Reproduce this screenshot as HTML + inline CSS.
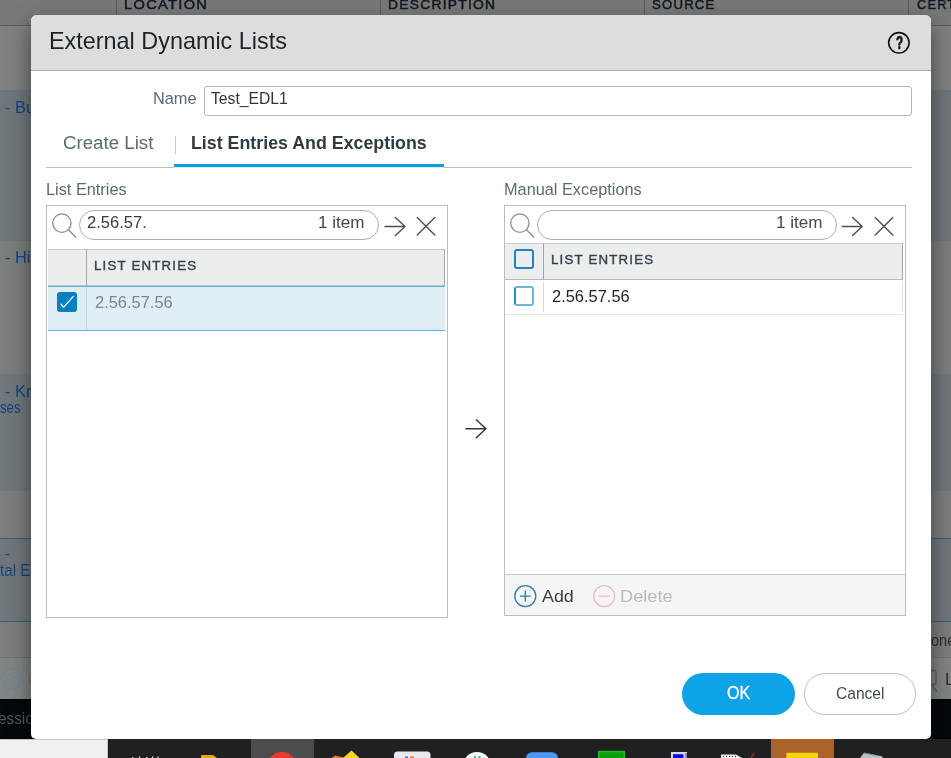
<!DOCTYPE html>
<html lang="en">
<head>
<meta charset="utf-8">
<title>External Dynamic Lists</title>
<style>
html,body{margin:0;padding:0;}
body{width:951px;height:758px;overflow:hidden;position:relative;background:#7f8080;font-family:"Liberation Sans",sans-serif;}
.abs,.t,div,span,svg,button,input,label,h1,ul,li,table{box-sizing:border-box;}
.t{position:absolute;line-height:1;white-space:nowrap;transform-origin:0 0;display:block;}
.bg div,.bg span,.bg svg{position:absolute;}
.dlg{position:absolute;left:31px;top:15px;width:900px;height:724px;background:#fff;border-radius:6px 6px 5px 5px;box-shadow:0 10px 22px rgba(0,0,0,.5);}
.dlg>*{position:absolute;}
.page *{position:absolute;}
</style>
</head>
<body>
<!-- ============ dimmed background page ============ -->
<div class="bg" style="position:absolute;left:0;top:0;width:951px;height:758px;will-change:transform;">
  <!-- grid header -->
  <div style="left:0;top:0;width:951px;height:26px;background:#767978;border-bottom:1px solid #5b5e5e;"></div>
  <div style="left:116px;top:0;width:1px;height:25px;background:#565959;"></div>
  <div style="left:380px;top:0;width:1px;height:25px;background:#565959;"></div>
  <div style="left:644px;top:0;width:1px;height:25px;background:#565959;"></div>
  <div style="left:908px;top:0;width:1px;height:25px;background:#565959;"></div>
  <span class="t" style="left:123.82px;top:-1.83px;font-size:13.5px;font-weight:400;color:#141822;letter-spacing:1.2px;transform:scaleX(1.0850);-webkit-text-stroke:0.5px #141822;">LOCATION</span><span class="t" style="left:387.97px;top:-1.83px;font-size:13.5px;font-weight:400;color:#141822;letter-spacing:1.2px;transform:scaleX(1.0266);-webkit-text-stroke:0.5px #141822;">DESCRIPTION</span><span class="t" style="left:652.40px;top:-1.83px;font-size:13.5px;font-weight:400;color:#141822;letter-spacing:1.2px;transform:scaleX(0.9784);-webkit-text-stroke:0.5px #141822;">SOURCE</span><span class="t" style="left:916.50px;top:-1.83px;font-size:13.5px;font-weight:400;color:#141822;letter-spacing:1.2px;transform:scaleX(0.9500);-webkit-text-stroke:0.5px #141822;">CERTIFICATE PROFILE</span>
  <!-- rows -->
  <div style="left:0;top:26px;width:951px;height:64px;background:#7f8080;"></div>
  <div style="left:0;top:90px;width:951px;height:151px;background:#70777b;"></div>
  <div style="left:0;top:241px;width:951px;height:133px;background:#7c7d7d;"></div>
  <div style="left:0;top:374px;width:951px;height:117px;background:#70777b;"></div>
  <div style="left:0;top:491px;width:951px;height:47px;background:#7c7d7d;"></div>
  <div style="left:0;top:538px;width:951px;height:84px;background:#70777b;border-top:1px solid #35607f;border-bottom:1px solid #35607f;"></div>
  <div style="left:0;top:622px;width:951px;height:36px;background:#7c7d7d;"></div>
  <!-- bottom toolbar -->
  <div style="left:0;top:657px;width:951px;height:42px;background:#838484;border-top:1px solid #707272;"></div>
  <!-- status bar -->
  <div style="left:0;top:699px;width:951px;height:40px;background:#03080b;"></div>

  <span class="t" style="left:5.20px;top:100.36px;font-size:16.7px;font-weight:400;color:#14457e;transform:scaleX(0.9800);">- Bulletproof IP addresses</span><span class="t" style="left:5.20px;top:250.36px;font-size:16.7px;font-weight:400;color:#14457e;transform:scaleX(0.9800);">- High risk IP addresses</span><span class="t" style="left:5.20px;top:383.66px;font-size:16.7px;font-weight:400;color:#14457e;transform:scaleX(0.9800);">- Known malicious IP addres</span><span class="t" style="left:0.20px;top:400.06px;font-size:16.7px;font-weight:400;color:#14457e;transform:scaleX(0.7883);">ses</span><span class="t" style="left:5.20px;top:546.26px;font-size:16.7px;font-weight:400;color:#14457e;transform:scaleX(0.9800);">-</span><span class="t" style="left:0.00px;top:563.36px;font-size:16.7px;font-weight:400;color:#14457e;transform:scaleX(0.9100);">tal Exclude List</span><span class="t" style="left:930.60px;top:631.69px;font-size:16.2px;font-weight:400;color:#2a2e31;transform:scaleX(0.9000);">one</span><span class="t" style="left:944.92px;top:671.14px;font-size:17.2px;font-weight:400;color:#2a2e31;transform:scaleX(0.9800);">Log Viewer</span><span class="t" style="left:-2.50px;top:710.99px;font-size:15.6px;font-weight:400;color:#50575c;transform:scaleX(0.9800);">ession Expire Time</span>
  <!-- toolbar icons -->
  <svg style="left:0;top:666px;" width="40" height="28" viewBox="0 666 40 28">
    <circle cx="11.9" cy="679.1" r="10.3" fill="none" stroke="#6c8797" stroke-width="1.1"/>
    <rect x="6.6" y="674.7" width="5.6" height="5.6" rx="1.4" fill="none" stroke="#6c8797" stroke-width="1.1"/>
    <rect x="10.8" y="677.8" width="7.8" height="6.2" rx="1.4" fill="#838585" stroke="#6c8797" stroke-width="1.1"/>
    <circle cx="39.2" cy="679.1" r="10.3" fill="none" stroke="#6c7478" stroke-width="1.1"/>
  </svg>
  <svg style="left:925px;top:666px;" width="26" height="30" viewBox="925 666 26 30">
    <rect x="926" y="670.5" width="10" height="14" rx="2" fill="none" stroke="#5b6063" stroke-width="1.3"/>
    <path d="M932 686 L937 691.5" stroke="#5b6063" stroke-width="1.3" fill="none"/>
  </svg>
  <!-- os bits -->
  <div style="left:0;top:739px;width:108px;height:19px;background:#f0f0f0;border-top:1px solid #c4c4c4;border-right:1px solid #c9c9c9;"></div>
  <div style="left:108px;top:739px;width:843px;height:19px;background:#202020;"></div>

  <!-- taskbar icons -->
  <div style="left:251px;top:739px;width:63px;height:19px;background:#4c4c4c;"></div>
  <div style="left:771px;top:739px;width:63px;height:19px;background:#ad6228;"></div>
  <svg style="left:109px;top:739px;" width="842" height="19" viewBox="109 739 842 19">
    <g fill="#d8d8d8"><rect x="132" y="757" width="1.5" height="1"/><rect x="139" y="756.4" width="1.2" height="1.6"/><rect x="146" y="757" width="1.5" height="1"/><rect x="152" y="756.4" width="1.2" height="1.6"/><rect x="157.5" y="756.4" width="1.2" height="1.6"/></g>
    <path d="M201 758 V756 Q201 755 202 755 H213 L217 758 Z" fill="#e7a619"/>
    <circle cx="282" cy="766" r="14.2" fill="#e8392c"/>
    <path d="M331 758 L335.5 755.6 L345 758 Z" fill="#d8801f"/>
    <path d="M343 758 L351.5 750.6 L359.5 758 Z" fill="#f6d818"/>
    <rect x="394" y="751.5" width="36.5" height="12" rx="3.5" fill="#e9e9ef"/>
    <rect x="405" y="756.5" width="3" height="2" fill="#3d6fe0"/><rect x="410" y="756.5" width="4" height="2" fill="#e8702a"/>
    <circle cx="477" cy="766" r="14" fill="#fafafa"/>
    <rect x="474" y="756.2" width="2" height="2" fill="#2bb673"/><rect x="478.5" y="756.2" width="2" height="2" fill="#2bb673"/>
    <rect x="526" y="752.2" width="32" height="14" rx="6" fill="#4a99f4"/>
    <rect x="598" y="750.8" width="27" height="10" fill="#22bd22"/><rect x="599.5" y="752.3" width="24" height="8" fill="#09a009"/>
    <rect x="671" y="752" width="16" height="8" fill="#d9d9e6"/><rect x="673" y="754.2" width="10.5" height="5" fill="#0a0ae0"/><rect x="685" y="753" width="2" height="6" fill="#8e8e9a"/>
    <path d="M721 754.5 H736 L742 758 H721 Z" fill="#f2f2f2"/>
    <g fill="#222"><rect x="723" y="755.8" width="1" height="1.2"/><rect x="726" y="755.8" width="1" height="1.2"/><rect x="729" y="755.8" width="1" height="1.2"/><rect x="732" y="755.8" width="1" height="1.2"/><rect x="735" y="755.8" width="1" height="1.2"/></g>
    <path d="M750.6 758 L753.4 752.5 L754.4 753.1 L752 758 Z" fill="#9a3a2e"/>
    <rect x="786.3" y="752.7" width="31.7" height="8" rx="1" fill="#f7d40a"/>
    <path d="M860 758 L864 752.8 L882.5 756.5 L882.5 758 Z" fill="#b9c2c2"/>
    <path d="M864 753 L876 755.4" stroke="#808888" stroke-width="1" fill="none"/>
  </svg>
</div>

<!-- ============ dialog ============ -->
<div style="position:absolute;left:0;top:0;width:951px;height:739px;overflow:hidden;"><div class="dlg" role="dialog"></div></div>
<div class="page" style="position:absolute;left:0;top:0;width:951px;height:758px;will-change:transform;">
  <!-- header -->
  <div style="left:31px;top:15px;width:900px;height:56px;background:#dcddde;border-radius:6px 6px 0 0;border-bottom:1px solid #a3adb3;"></div>
  <span class="t" style="left:49.42px;top:28.55px;font-size:23.8px;font-weight:400;color:#1d2226;transform:scaleX(0.9829);">External Dynamic Lists</span>
  <svg style="left:885px;top:29px;" width="28" height="28" viewBox="885 29 28 28"><circle cx="898.9" cy="42.8" r="10.2" fill="none" stroke="#141414" stroke-width="1.6"/></svg>
  <span class="t" style="left:896.00px;top:35.10px;font-size:17.6px;font-weight:700;color:#141414;transform:scaleX(0.6600);-webkit-text-stroke:0.7px #141414;">?</span>
  <!-- name row -->
  <span class="t" style="left:152.52px;top:90.56px;font-size:16.7px;font-weight:400;color:#5c6a73;transform:scaleX(0.9784);">Name</span>
  <div style="left:204px;top:86px;width:708px;height:30px;border:1px solid #b3b9bd;border-radius:3px;background:#fff;"></div>
  <span class="t" style="left:210.90px;top:90.56px;font-size:16.7px;font-weight:400;color:#2b353c;transform:scaleX(0.9404);">Test_EDL1</span>
  <!-- tabs -->
  <span class="t" style="left:63.20px;top:134.49px;font-size:18.8px;font-weight:400;color:#5c6a73;transform:scaleX(0.9946);">Create List</span>
  <div style="left:175px;top:136px;width:1px;height:18px;background:#c9cdd0;"></div>
  <span class="t" style="left:190.75px;top:134.49px;font-size:18.8px;font-weight:700;color:#2f3b44;transform:scaleX(0.9477);">List Entries And Exceptions</span>
  <div style="left:46px;top:167px;width:866px;height:1px;background:#b9bfc3;"></div>
  <div style="left:174px;top:164px;width:270px;height:3px;background:#069fe3;"></div>
  <div style="left:174px;top:167px;width:270px;height:1px;background:#ebe3e0;"></div>
  <span class="t" style="left:45.82px;top:181.76px;font-size:16.7px;font-weight:400;color:#5c6a73;transform:scaleX(0.9766);">List Entries</span><span class="t" style="left:503.62px;top:181.76px;font-size:16.7px;font-weight:400;color:#5c6a73;transform:scaleX(0.9767);">Manual Exceptions</span>

  <!-- ===== left panel : list entries ===== -->
  <div style="left:46px;top:205px;width:402px;height:413px;border:1px solid #b9bec1;background:#fff;"></div>
  
  <svg style="left:47px;top:207px;" width="400" height="36" viewBox="47 207 400 36">
    <circle cx="61.9" cy="223.1" r="9.2" fill="none" stroke="#858d93" stroke-width="1.3"/>
    <path d="M68.7 230 L75.6 236.9" stroke="#858d93" stroke-width="1.4" stroke-linecap="round" fill="none"/>
    <path d="M385.0 226.5 H405.0 M395.4 217.5 L405.0 226.5 L395.4 235.5" fill="none" stroke="#4b4f52" stroke-width="1.4" stroke-linecap="round" stroke-linejoin="round"/>
    <path d="M417.2 217.4 L434.8 235 M434.8 217.4 L417.2 235" stroke="#4b4f52" stroke-width="1.4" stroke-linecap="round" fill="none"/>
  </svg>
  <div style="left:79px;top:210px;width:300px;height:30px;border:1px solid #a9b0b5;border-radius:15px;background:#fff;"></div>
  <span class="t" style="left:86.90px;top:214.96px;font-size:16.7px;font-weight:400;color:#333c43;transform:scaleX(0.9903);">2.56.57.</span><span class="t" style="left:318.28px;top:214.56px;font-size:16.7px;font-weight:400;color:#3f4a52;transform:scaleX(1.0243);">1 item</span>
  <div style="left:48px;top:249px;width:397px;height:37px;background:#eceeee;border-top:1px solid #c9cdcf;border-bottom:1px solid #bcc1c4;"></div>
  <div style="left:86px;top:249px;width:1px;height:37px;background:#a1a8ac;"></div>
  <div style="left:444px;top:249px;width:1px;height:37px;background:#a1a8ac;"></div>
  <span class="t" style="left:93.92px;top:259.17px;font-size:13.5px;font-weight:400;color:#38434c;letter-spacing:1.2px;transform:scaleX(0.9836);-webkit-text-stroke:0.42px #38434c;">LIST ENTRIES</span>
  <div style="left:48px;top:286px;width:397px;height:45px;background:#dfedf5;border-top:1px solid #62b0db;border-bottom:1px solid #62b0db;"></div>
  <div style="left:86px;top:287px;width:1px;height:43px;background:#c9d3d9;"></div>
  <div style="left:57px;top:292px;width:20px;height:20px;background:#0b7fbe;border-radius:3px;"></div>
  <svg style="left:57px;top:292px;" width="20" height="20" viewBox="57 292 20 20"><path d="M61 304.2 L63.8 307.2 L73.3 296.3" fill="none" stroke="#f4fafd" stroke-width="1.25" stroke-linecap="round" stroke-linejoin="round"/></svg>
  <span class="t" style="left:94.80px;top:295.16px;font-size:16.7px;font-weight:400;color:#80868a;transform:scaleX(0.9848);">2.56.57.56</span>

  <!-- ===== middle arrow ===== -->
  <svg style="left:460px;top:415px;" width="32" height="28" viewBox="460 415 32 28"><path d="M465.9 428.7 H485.9 M476.3 419.7 L485.9 428.7 L476.3 437.7" fill="none" stroke="#333638" stroke-width="1.5" stroke-linecap="round" stroke-linejoin="round"/></svg>

  <!-- ===== right panel : manual exceptions ===== -->
  <div style="left:504px;top:205px;width:402px;height:411px;border:1px solid #b9bec1;background:#fff;"></div>
  
  <svg style="left:505px;top:207px;" width="400" height="36" viewBox="505 207 400 36">
    <circle cx="519.9" cy="223.1" r="9.2" fill="none" stroke="#858d93" stroke-width="1.3"/>
    <path d="M526.7 230 L533.6 236.9" stroke="#858d93" stroke-width="1.4" stroke-linecap="round" fill="none"/>
    <path d="M842.2 226.5 H862.2 M852.6 217.5 L862.2 226.5 L852.6 235.5" fill="none" stroke="#4b4f52" stroke-width="1.4" stroke-linecap="round" stroke-linejoin="round"/>
    <path d="M875.2 217.4 L892.8 235 M892.8 217.4 L875.2 235" stroke="#4b4f52" stroke-width="1.4" stroke-linecap="round" fill="none"/>
  </svg>
  <div style="left:537px;top:210px;width:300px;height:30px;border:1px solid #a9b0b5;border-radius:15px;background:#fff;"></div>
  <span class="t" style="left:775.68px;top:214.56px;font-size:16.7px;font-weight:400;color:#3f4a52;transform:scaleX(1.0243);">1 item</span>
  <div style="left:505px;top:243px;width:398px;height:37px;background:#eceeee;border-top:1px solid #c9cdcf;border-bottom:1px solid #b6bcc0;"></div>
  <div style="left:543px;top:243px;width:1px;height:37px;background:#a1a8ac;"></div>
  <div style="left:902px;top:243px;width:1px;height:37px;background:#a1a8ac;"></div>
  <div style="left:514px;top:249px;width:20px;height:20px;border:2px solid #1e86c0;border-radius:3px;"></div>
  <span class="t" style="left:551.22px;top:253.17px;font-size:13.5px;font-weight:400;color:#38434c;letter-spacing:1.2px;transform:scaleX(0.9836);-webkit-text-stroke:0.42px #38434c;">LIST ENTRIES</span>
  <div style="left:505px;top:280px;width:398px;height:35px;background:#fff;border-bottom:1px solid #e6e9ea;"></div>
  <div style="left:543px;top:282px;width:1px;height:30px;background:#d3d8db;"></div>
  <div style="left:902px;top:282px;width:1px;height:30px;background:#dde1e3;"></div>
  <div style="left:514px;top:286px;width:20px;height:20px;border:2px solid #6db5d9;border-left-color:#2a8dc4;border-radius:3px;background:#fff;"></div>
  <span class="t" style="left:552.10px;top:288.76px;font-size:16.7px;font-weight:400;color:#1e2022;transform:scaleX(0.9848);">2.56.57.56</span>
  <div style="left:505px;top:574px;width:400px;height:41px;background:#f4f6f6;border-top:1px solid #c4c9cc;"></div>
  <svg style="left:510px;top:582px;" width="112" height="28" viewBox="510 582 112 28">
    <circle cx="525.3" cy="596.1" r="10.5" fill="none" stroke="#2e7fa6" stroke-width="1.35"/>
    <path d="M520 596.1 H530.6 M525.3 590.8 V601.4" stroke="#2e7fa6" stroke-width="1.35" fill="none"/>
    <circle cx="604.2" cy="596.1" r="10.5" fill="none" stroke="#ecbfc3" stroke-width="1.35"/>
    <path d="M598.2 596.1 H610.2" stroke="#ecbfc3" stroke-width="1.35" fill="none"/>
  </svg>
  <span class="t" style="left:541.70px;top:587.67px;font-size:17.4px;font-weight:400;color:#3a3d40;transform:scaleX(1.0274);">Add</span><span class="t" style="left:619.75px;top:587.67px;font-size:17.4px;font-weight:400;color:#b9bbbc;transform:scaleX(1.0453);">Delete</span>

  <!-- ===== buttons ===== -->
  <div style="left:682px;top:673px;width:113px;height:42px;border-radius:21px;background:#0ea2e6;"></div>
  <span class="t" style="left:726.80px;top:683.96px;font-size:18.0px;font-weight:400;color:#ffffff;transform:scaleX(0.8923);-webkit-text-stroke:0.3px #ffffff;">OK</span>
  <div style="left:804px;top:673px;width:112px;height:42px;border-radius:21px;background:#fff;border:1px solid #bbc0c3;"></div>
  <span class="t" style="left:835.80px;top:685.17px;font-size:17.4px;font-weight:400;color:#454d53;transform:scaleX(0.8954);">Cancel</span>
</div>
</body>
</html>
